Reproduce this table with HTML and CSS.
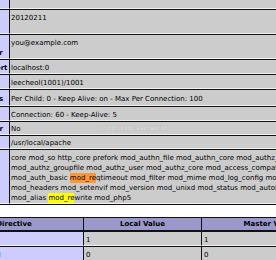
FILE: index.html
```html
<!DOCTYPE html>
<html>
<head>
<meta charset="utf-8">
<title>phpinfo()</title>
<link rel="stylesheet" href="styles.css">
</head>
<body>
<div class="page">
  <table class="info">
    <tr class="cut"><td class="e"></td><td class="v"></td></tr>
    <tr><td class="e">Apache API Version</td><td class="v">20120211</td></tr>
    <tr><td class="e">Server Administrator</td><td class="v">you@example.com</td></tr>
    <tr><td class="e">Hostname:Port</td><td class="v">localhost:0</td></tr>
    <tr><td class="e">User/Group</td><td class="v">leecheol(1001)/1001</td></tr>
    <tr class="tall"><td class="e">Max Requests</td><td class="v">Per Child: 0 - Keep Alive: on - Max Per Connection: 100</td></tr>
    <tr><td class="e">Timeouts</td><td class="v">Connection: 60 - Keep-Alive: 5</td></tr>
    <tr class="short"><td class="e">Virtual Server</td><td class="v">No</td></tr>
    <tr class="short"><td class="e">Server Root</td><td class="v">/usr/local/apache</td></tr>
    <tr><td class="e">Loaded Modules</td><td class="v mods">core mod_so http_core prefork mod_authn_file mod_authn_core mod_authz_host<br>mod_authz_groupfile mod_authz_user mod_authz_core mod_access_compat<br>mod_auth_basic <mark class="cur">mod_re</mark>qtimeout mod_filter mod_mime mod_log_config mod_env<br>mod_headers mod_setenvif mod_version mod_unixd mod_status mod_autoindex mod_dir<br>mod_alias <mark class="hit">mod_re</mark>write mod_php5</td></tr>
  </table>

  <table class="dirs">
    <tr class="h"><th class="c1">Directive</th><th class="c2">Local Value</th><th class="c3">Master Value</th></tr>
    <tr><td class="e">engine</td><td class="v">1</td><td class="v">1</td></tr>
    <tr><td class="e">last_modified</td><td class="v">0</td><td class="v">0</td></tr>
    <tr><td class="e">xbithack</td><td class="v">0</td><td class="v">0</td></tr>
  </table>
</div>
<div class="wm">http://blog.leecheol.kr</div>
</body>
</html>
```
FILE: styles.css
```css
html, body {
  margin: 0;
  padding: 0;
  background: #ffffff;
}
body {
  width: 276px;
  height: 260px;
  overflow: hidden;
  position: relative;
  font-family: "DejaVu Sans", sans-serif;
  font-size: 7px;
  line-height: 10px;
  color: #000000;
}
.page {
  margin-left: -55px;
}
table {
  border-collapse: separate;
  border-spacing: 0;
  table-layout: fixed;
}
td, th {
  padding: 3px 2px 0 1px;
  vertical-align: top;
  text-align: left;
  border-top: 1px solid #111111;
  border-bottom: 1px solid #f2f2f2;
}
.e {
  background: #ccccff;
  font-weight: bold;
  padding-left: 3px;
  padding-right: 1px;
  border-right: 1px solid #111111;
}
.v {
  background: #cccccc;
}
.info {
  width: 485px;
  border-bottom: 1px solid #111111;
}
.info .e {
  width: 60px;
}
.cut td {
  border-top: 0;
  height: 8px;
  padding-top: 0;
  padding-bottom: 0;
}
.tall td {
  padding-top: 4px;
  padding-bottom: 1px;
}
.short td {
  padding-top: 2px;
  padding-bottom: 0;
}
.mods {
  white-space: nowrap;
}
mark {
  color: #000000;
  padding: 1px 0;
}
.cur {
  background: #ff9632;
}
.hit {
  background: #ffff00;
}
.dirs {
  margin-top: 12px;
  width: 392px;
}
.dirs .v {
  padding-left: 2px;
}
.h th {
  background: #9999cc;
  font-weight: bold;
  text-align: center;
  padding: 1px 2px;
  border-bottom: 1px solid #111111;
  border-right: 1px solid #111111;
}
.h th.c3 {
  border-right: 0;
}
.c1 { width: 133px; }
.c2 { width: 112px; }
.c3 { width: 130px; }
.dirs td.v:nth-child(2) {
  border-right: 1px solid #111111;
}
.wm {
  position: absolute;
  left: 103px;
  top: 124px;
  font-size: 6px;
  line-height: 8px;
  color: rgba(255, 255, 255, 0.85);
  text-shadow: 0 0 1px rgba(90, 90, 90, 0.6);
  letter-spacing: -0.1px;
}
```
